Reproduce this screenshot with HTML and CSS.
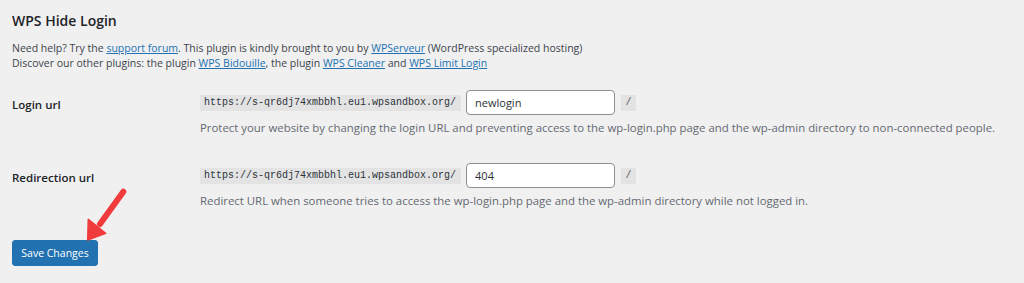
FILE: index.html
```html
<!DOCTYPE html>
<html lang="en">
<head>
<meta charset="utf-8">
<title>WPS Hide Login</title>
<link rel="stylesheet" href="styles.css">
</head>
<body>
<div class="wrap">
  <h2 class="title">WPS Hide Login</h2>
  <p class="intro">Need help? Try the <a href="#">support forum</a>. This plugin is kindly brought to you by <a href="#">WPServeur</a> (WordPress specialized hosting)<br>Discover our other plugins: the plugin <a href="#">WPS Bidouille</a>, the plugin <a href="#">WPS Cleaner</a> and <a href="#">WPS Limit Login</a></p>

  <div class="form">
    <div class="row row-login">
      <div class="label">Login url</div>
      <div class="field">
        <div class="line">
          <code class="prefix">https://s-qr6dj74xmbbhl.eu1.wpsandbox.org/</code>
          <input class="text" type="text" value="newlogin">
          <code class="slash">/</code>
        </div>
        <p class="desc">Protect your website by changing the login URL and preventing access to the wp-login.php page and the wp-admin directory to non-connected people.</p>
      </div>
    </div>
    <div class="row row-redirect">
      <div class="label">Redirection url</div>
      <div class="field">
        <div class="line">
          <code class="prefix">https://s-qr6dj74xmbbhl.eu1.wpsandbox.org/</code>
          <input class="text" type="text" value="404">
          <code class="slash">/</code>
        </div>
        <p class="desc">Redirect URL when someone tries to access the wp-login.php page and the wp-admin directory while not logged in.</p>
      </div>
    </div>
  </div>

  <div class="submit">
    <button class="button-primary" type="button">Save Changes</button>
  </div>

  <svg class="arrow" width="60" height="70" viewBox="0 0 60 70" aria-hidden="true">
    <line x1="52.3" y1="10.7" x2="29" y2="43" stroke="#f03c3c" stroke-width="6" stroke-linecap="round"/>
    <polygon points="16.7,59 17.3,38.3 34.7,52.3" fill="#f03c3c" stroke="#f03c3c" stroke-width="1.5" stroke-linejoin="round"/>
  </svg>
</div>
</body>
</html>
```

FILE: styles.css
```css
html, body {
  margin: 0;
  padding: 0;
  background: #f0f0f1;
}
body {
  font-family: "Open Sans", "Noto Sans", sans-serif;
  color: #3c434a;
  font-size: 11px;
}
.wrap {
  position: relative;
  padding: 0 12px;
  height: 283px;
  box-sizing: border-box;
}
.title {
  margin: 0;
  padding-top: 10px;
  font-size: 14px;
  line-height: 22px;
  font-weight: 600;
  color: #1d2327;
}
.intro {
  margin: 9px 0 0;
  font-size: 10.5px;
  line-height: 15px;
  color: #3c434a;
}
.intro a {
  color: #2271b1;
  text-decoration: underline;
}
.form {
  margin-top: 19px;
}
.row {
  display: grid;
  grid-template-columns: 188px 1fr;
}
.row-redirect {
  margin-top: 28px;
}
.label {
  font-size: 11.5px;
  font-weight: 600;
  color: #1d2327;
  line-height: 25px;
  padding-top: 2px;
}
.line {
  display: flex;
  align-items: center;
  height: 25px;
  white-space: nowrap;
}
.prefix, .slash {
  font-family: "Liberation Mono", "DejaVu Sans Mono", monospace;
  font-size: 10px;
  line-height: 16px;
  background: #e3e3e4;
  color: #2c3338;
  height: 16px;
  white-space: nowrap;
  flex: none;
}
.prefix {
  padding: 0 5px 0 4px;
}
.text {
  margin-left: 5px;
  width: 149px;
  height: 25px;
  box-sizing: border-box;
  border: 1px solid #8c8f94;
  border-radius: 4px;
  background: #fff;
  padding: 0 8px;
  font-family: "Open Sans", "Noto Sans", sans-serif;
  font-size: 11px;
  color: #2c3338;
  flex: none;
}
.slash {
  margin-left: 6px;
  width: 15px;
  box-sizing: border-box;
  text-align: center;
  padding: 0;
  color: #50575e;
}
.desc {
  margin: 5px 0 0;
  font-size: 11.4px;
  line-height: 15px;
  color: #646970;
  white-space: nowrap;
}
.submit {
  margin-top: 32px;
}
.button-primary {
  background: #2271b1;
  border: 1px solid #2271b1;
  color: #fff;
  border-radius: 3px;
  height: 26px;
  width: 86px;
  padding: 0;
  font-family: "Open Sans", "Noto Sans", sans-serif;
  font-size: 10.5px;
  cursor: pointer;
}
.arrow {
  position: absolute;
  left: 71px;
  top: 181px;
}
```
